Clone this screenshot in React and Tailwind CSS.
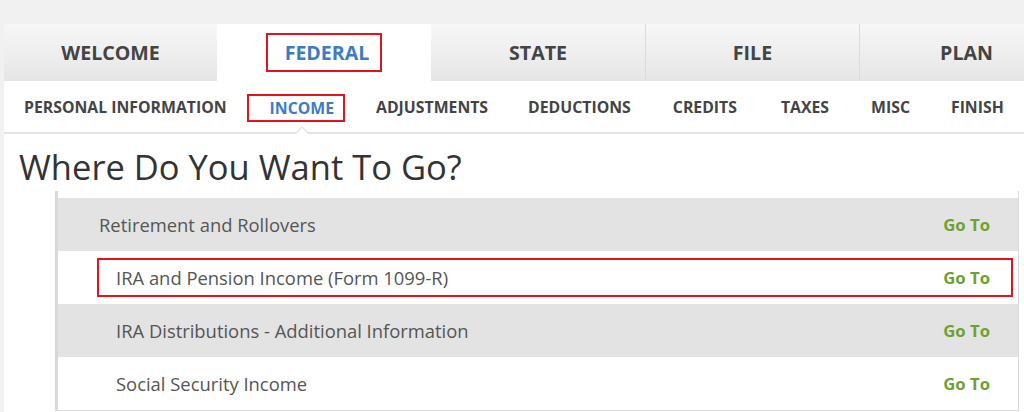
import React from "react";

const tabs = ["WELCOME", "FEDERAL", "STATE", "FILE", "PLAN"];
const subTabs = [
  "PERSONAL INFORMATION",
  "INCOME",
  "ADJUSTMENTS",
  "DEDUCTIONS",
  "CREDITS",
  "TAXES",
  "MISC",
  "FINISH",
];
const subGaps = ["mr-[20px]", "mr-[31px]", "mr-[40px]", "mr-[42px]", "mr-[44px]", "mr-[42px]", "mr-[41px]", ""];

const rows = [
  { label: "Retirement and Rollovers", grey: true, indent: false },
  { label: "IRA and Pension Income (Form 1099-R)", grey: false, indent: true, boxed: true },
  { label: "IRA Distributions - Additional Information", grey: true, indent: true },
  { label: "Social Security Income", grey: false, indent: true },
];

const App = () => {
  return (
    <div
      className="w-[1024px] h-[412px] overflow-hidden bg-[#f1f1f1] pt-[24px] pl-[4px]"
      style={{ fontFamily: '"Open Sans", "Liberation Sans", sans-serif' }}
    >
      <div className="bg-white h-full overflow-hidden">
        {/* main tabs */}
        <div className="flex h-[57px]">
          {tabs.map((t, i) => {
            const active = t === "FEDERAL";
            return (
              <div
                key={t}
                className={`flex items-center justify-center shrink-0 text-[19.6px] font-bold ${
                  i === 0 ? "w-[213px]" : "w-[214px]"
                } ${
                  active
                    ? "bg-white text-[#3d7cc4]"
                    : "bg-gradient-to-b from-[#f7f7f7] to-[#e6e6e6] text-[#444]"
                } ${i > 2 ? "border-l border-[#dcdcdc]" : ""}`}
              >
                {active ? (
                  <span className="border-2 border-[#e0141b] pl-[17px] pr-[11px] py-[4px] leading-[27px]">{t}</span>
                ) : (
                  <span>{t}</span>
                )}
              </div>
            );
          })}
        </div>

        {/* sub nav */}
        <div className="relative flex items-center h-[53px] pt-[3px] border-b-2 border-[#e3e3e3] pl-[20px] text-[15.8px] font-bold text-[#444]">
          {subTabs.map((s, i) =>
            s === "INCOME" ? (
              <span
                key={s}
                className={`border-2 border-[#e0141b] pl-[21px] pr-[9px] leading-[24px] text-[#3d7cc4] ${subGaps[i]}`}
              >
                {s}
              </span>
            ) : (
              <span key={s} className={`whitespace-nowrap ${subGaps[i]}`}>
                {s}
              </span>
            )
          )}
          <span className="absolute left-[290px] -bottom-[2px] w-0 h-0 border-l-[8px] border-r-[8px] border-b-[8px] border-l-transparent border-r-transparent border-b-[#e3e3e3]" />
          <span className="absolute left-[292px] -bottom-[2px] w-0 h-0 border-l-[6px] border-r-[6px] border-b-[6px] border-l-transparent border-r-transparent border-b-white" />
        </div>

        {/* heading */}
        <h1 className="pl-[15px] pt-[10px] text-[34.5px] leading-[46px] text-[#333] font-normal">
          Where Do You Want To Go?
        </h1>

        {/* list */}
        <div className="ml-[51px] mr-[5px] mt-[1px] border-l-[3px] border-r border-b border-[#d9d9d9] pt-[7px]">
          {rows.map((r) => (
            <div
              key={r.label}
              className={`h-[53px] flex items-center text-[18.4px] text-[#555] ${
                r.grey ? "bg-[#e3e3e3]" : "bg-white"
              }`}
            >
              {r.boxed ? (
                <div className="ml-[39px] mr-[5px] flex-1 h-[39px] border-2 border-[#e0141b] flex items-center pl-[17px] pr-[21px]">
                  <span className="flex-1">{r.label}</span>
                  <span className="text-[#6da230] font-bold text-[16.7px]">Go To</span>
                </div>
              ) : (
                <>
                  <span className={`flex-1 ${r.indent ? "pl-[58px]" : "pl-[41px]"}`}>{r.label}</span>
                  <span className="text-[#6da230] font-bold text-[16.7px] pr-[28px]">Go To</span>
                </>
              )}
            </div>
          ))}
        </div>
      </div>
    </div>
  );
};

export default App;
